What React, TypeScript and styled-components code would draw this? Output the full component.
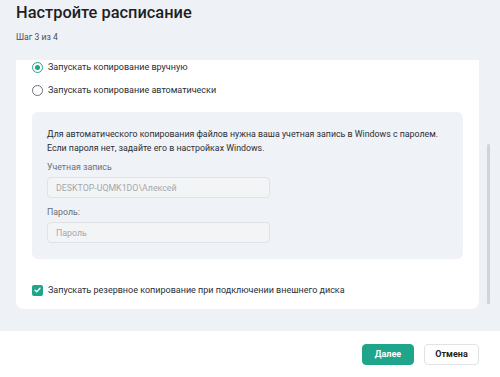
import React from 'react';
import styled, { createGlobalStyle } from 'styled-components';

const GlobalStyle = createGlobalStyle`
  html, body {
    margin: 0;
    padding: 0;
    background: #ffffff;
  }
  body {
    font-family: Roboto, "Noto Sans", sans-serif;
    color: #1d1f22;
  }
`;

const accent = '#1fa589';

const StyledPage = styled.div`
  width: 500px;
  height: 377px;
  display: flex;
  flex-direction: column;
  overflow: hidden;
`;

const StyledMain = styled.div`
  flex: 1;
  background-color: #eef1f6;
  padding: 0 10px 0 16px;
  display: flex;
  flex-direction: column;
  min-height: 0;
`;

const StyledTitle = styled.h1`
  margin: 3px 0 0;
  font-size: 16.4px;
  line-height: 20px;
  font-weight: 500;
`;

const StyledStep = styled.div`
  margin-top: 8px;
  font-size: 8.6px;
  line-height: 12px;
  color: #4a4d52;
`;

const StyledScrollArea = styled.div`
  margin-top: 17px;
  display: flex;
  gap: 8px;
`;

const StyledCard = styled.div`
  flex: 1;
  background: #fff;
  border-radius: 0 0 8px 8px;
  padding: 0 16px 12px;
`;

const StyledTrack = styled.div`
  width: 3px;
  padding-top: 84px;
`;

const StyledThumb = styled.div`
  height: 160px;
  background: #cfd3da;
  border-radius: 2px;
`;

const StyledOption = styled.label<{ offset?: number }>`
  display: flex;
  align-items: center;
  gap: 5px;
  margin-top: ${(p) => p.offset ?? 0}px;
  font-size: 9px;
  line-height: 14px;
  height: 14px;
  color: #2b2e33;
`;

const StyledRadio = styled.span<{ checked: boolean }>`
  width: 11px;
  height: 11px;
  box-sizing: border-box;
  border-radius: 50%;
  border: 1px solid ${(p) => (p.checked ? accent : '#6d7178')};
  display: flex;
  align-items: center;
  justify-content: center;
  &::after {
    content: '';
    width: 5px;
    height: 5px;
    border-radius: 50%;
    background: ${(p) => (p.checked ? accent : 'transparent')};
  }
`;

const StyledCheck = styled.span`
  width: 11px;
  height: 11px;
  border-radius: 2px;
  background: ${accent};
  display: flex;
  align-items: center;
  justify-content: center;
`;

const StyledInfoBox = styled.div`
  margin-top: 15px;
  background: #eff2f7;
  border-radius: 6px;
  padding: 15px 8px 16px 15px;
`;

const StyledInfoText = styled.p`
  margin: 0;
  font-size: 8.8px;
  line-height: 14px;
  color: #2b2e33;
  white-space: nowrap;
`;

const StyledField = styled.div<{ offset: number }>`
  margin-top: ${(p) => p.offset}px;
  display: flex;
  flex-direction: column;
  gap: 4px;
`;

const StyledLabel = styled.div`
  font-size: 8.8px;
  line-height: 12px;
  color: #6b6f76;
`;

const StyledInput = styled.input`
  width: 223px;
  height: 21px;
  box-sizing: border-box;
  border: 1px solid #dfe2e7;
  border-radius: 4px;
  background: #f3f4f6;
  padding: 0 8px;
  font-family: inherit;
  font-size: 8.8px;
  color: #a4a8ae;
  outline: none;
  &::placeholder {
    color: #a4a8ae;
  }
`;

const StyledFooter = styled.div`
  height: 46px;
  flex: none;
  background: #fff;
  display: flex;
  justify-content: flex-end;
  align-items: center;
  gap: 10px;
  padding: 0 21px 0 0;
`;

const StyledButton = styled.button<{ primary?: boolean }>`
  height: 21px;
  width: ${(p) => (p.primary ? '52px' : '55px')};
  padding: 0;
  border-radius: 4px;
  font-family: inherit;
  font-size: 9px;
  font-weight: 700;
  border: 1px solid ${(p) => (p.primary ? accent : '#dfe2e7')};
  background: ${(p) => (p.primary ? accent : '#fff')};
  color: ${(p) => (p.primary ? '#fff' : '#1d1f22')};
`;

export default function App() {
  return (
    <>
      <GlobalStyle />
      <StyledPage>
        <StyledMain>
          <StyledTitle>Настройте расписание</StyledTitle>
          <StyledStep>Шаг 3 из 4</StyledStep>
          <StyledScrollArea>
            <StyledCard>
              <StyledOption>
                <StyledRadio checked />
                Запускать копирование вручную
              </StyledOption>
              <StyledOption offset={9}>
                <StyledRadio checked={false} />
                Запускать копирование автоматически
              </StyledOption>
              <StyledInfoBox>
                <StyledInfoText>
                  Для автоматического копирования файлов нужна ваша учетная запись в Windows с паролем.
                  <br />
                  Если пароля нет, задайте его в настройках Windows.
                </StyledInfoText>
                <StyledField offset={6}>
                  <StyledLabel>Учетная запись</StyledLabel>
                  <StyledInput readOnly value="DESKTOP-UQMK1DO\Алексей" />
                </StyledField>
                <StyledField offset={8}>
                  <StyledLabel>Пароль:</StyledLabel>
                  <StyledInput readOnly placeholder="Пароль" />
                </StyledField>
              </StyledInfoBox>
              <StyledOption offset={24}>
                <StyledCheck>
                  <svg width="7" height="6" viewBox="0 0 7 6">
                    <path d="M1 3.2 L2.8 4.8 L6 1.2" fill="none" stroke="#fff" strokeWidth="1.3" strokeLinecap="round" strokeLinejoin="round" />
                  </svg>
                </StyledCheck>
                Запускать резервное копирование при подключении внешнего диска
              </StyledOption>
            </StyledCard>
            <StyledTrack>
              <StyledThumb />
            </StyledTrack>
          </StyledScrollArea>
        </StyledMain>
        <StyledFooter>
          <StyledButton primary>Далее</StyledButton>
          <StyledButton>Отмена</StyledButton>
        </StyledFooter>
      </StyledPage>
    </>
  );
}
